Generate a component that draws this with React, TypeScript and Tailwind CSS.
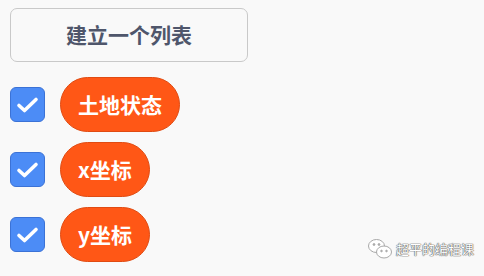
import React from "react";

const font = { fontFamily: '"Noto Sans CJK SC", "Noto Sans", sans-serif' };

const items = ["土地状态", "x坐标", "y坐标"];

const Check = () => (
  <div className="flex h-[35px] w-[35px] shrink-0 items-center justify-center rounded-[6px] border border-[#3b72d6] bg-[#4c8cf6]">
    <svg width="23" height="18" viewBox="0 0 23 18" fill="none">
      <path d="M3 9.5l5.5 5L20 3.5" stroke="white" strokeWidth="3.6" strokeLinecap="round" strokeLinejoin="round" />
    </svg>
  </div>
);

const WeChat = () => (
  <svg width="26" height="22" viewBox="0 0 26 22" fill="none" stroke="#a8a8a8" strokeWidth="1">
    <ellipse cx="9.5" cy="8" rx="8" ry="6.5" fill="white" />
    <ellipse cx="17" cy="14" rx="7.5" ry="6" fill="white" />
    <circle cx="7" cy="6.5" r="0.9" fill="#a8a8a8" />
    <circle cx="12" cy="6.5" r="0.9" fill="#a8a8a8" />
    <circle cx="14.5" cy="13" r="0.8" fill="#a8a8a8" />
    <circle cx="19.5" cy="13" r="0.8" fill="#a8a8a8" />
  </svg>
);

export default function App() {
  return (
    <div className="relative h-[276px] w-[484px] overflow-hidden bg-[#f9f9f9] pl-[10px] pt-[8px]" style={font}>
      <div className="flex h-[54px] w-[238px] items-center justify-center rounded-[7px] border border-[#c9c9c9] bg-[#f9f9f9] text-[21px] font-bold text-[#4f566b]">
        建立一个列表
      </div>
      <div className="mt-[15px] flex flex-col gap-[10px]">
        {items.map((t) => (
          <div key={t} className="flex items-center gap-[15px]">
            <Check />
            <div className="flex h-[55px] items-center rounded-full border border-[#e04b12] bg-[#ff5716] px-[17px] text-[21px] font-bold text-white">
              {t}
            </div>
          </div>
        ))}
      </div>
      <div className="absolute left-[367px] top-[238px] flex items-center gap-[3px]">
        <WeChat />
        <span className="text-[13px] text-white [text-shadow:0_0_1px_#555,0_0_1px_#555,0_0_1px_#555]">超平的编程课</span>
      </div>
    </div>
  );
}
